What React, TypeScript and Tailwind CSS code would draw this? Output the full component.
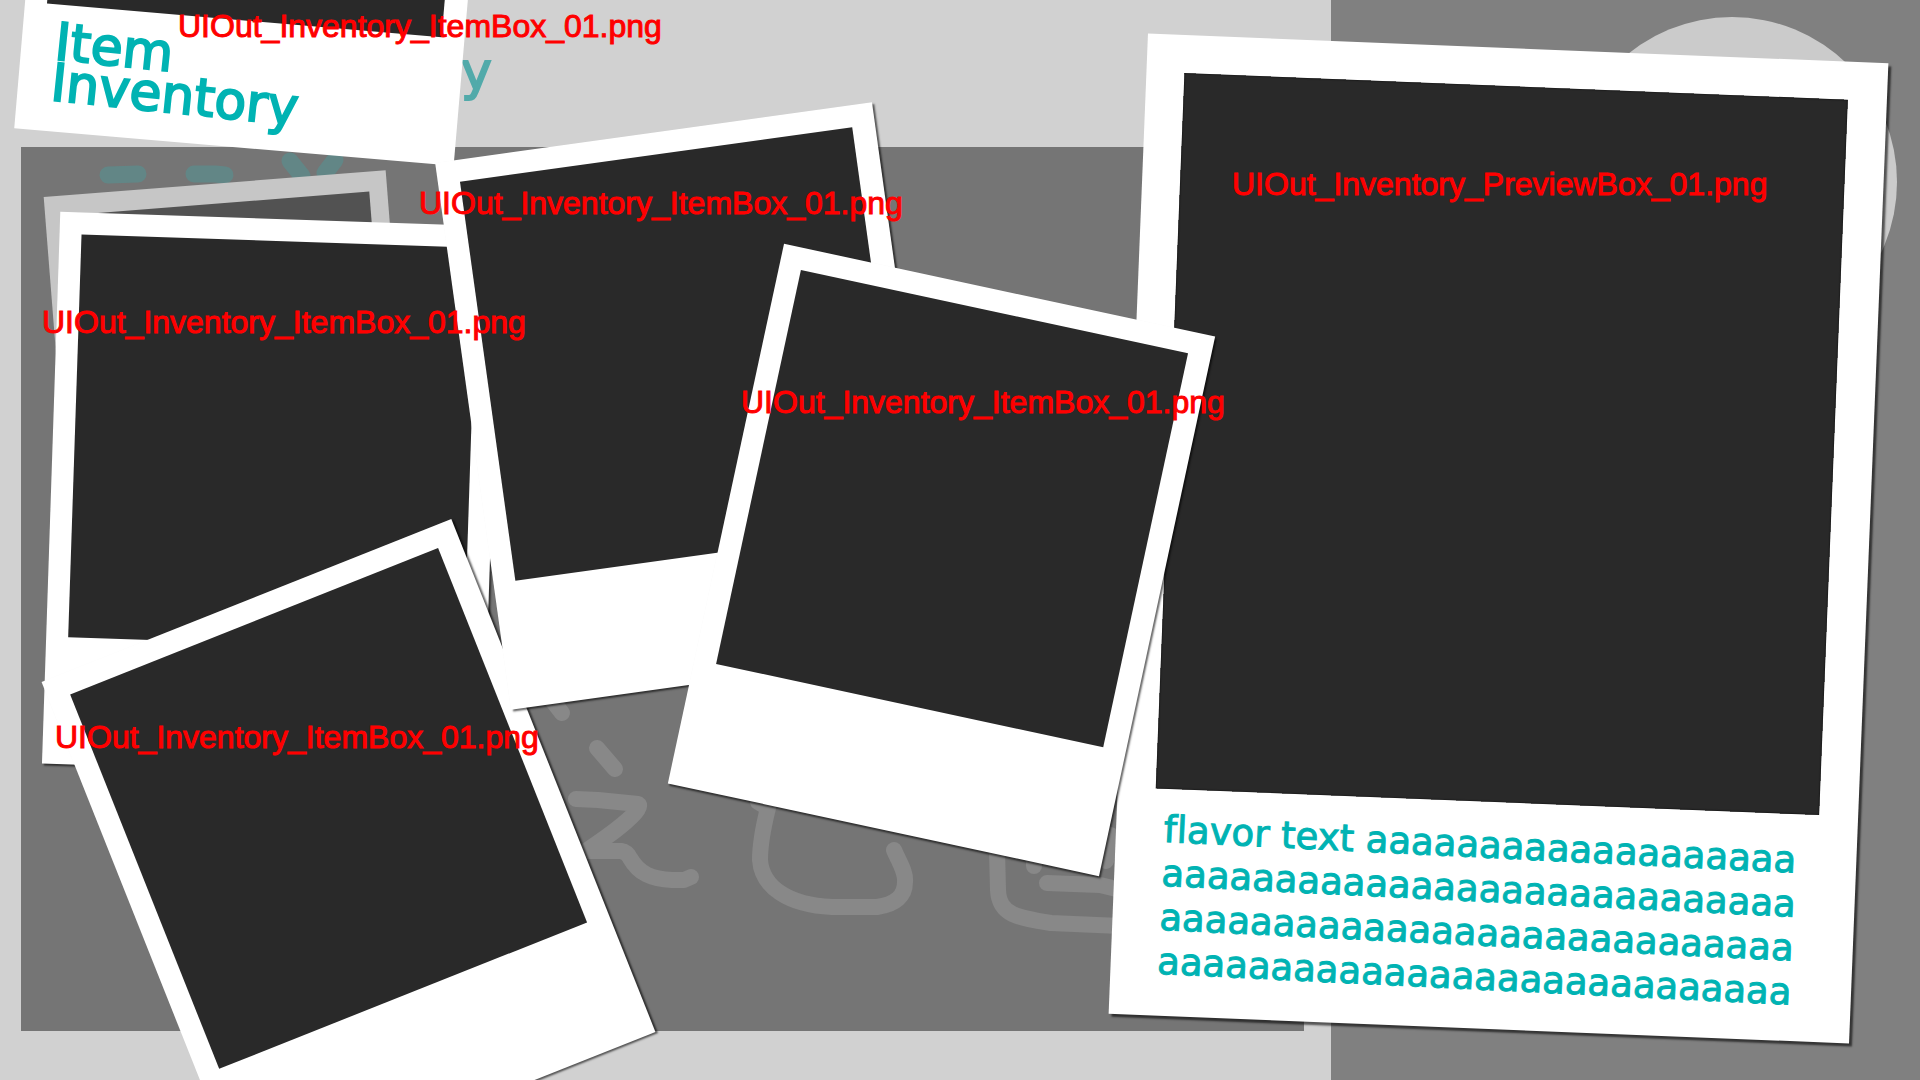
import type { ReactNode } from "react";

const ITEM_FILE = "UIOut_Inventory_ItemBox_01.png";
const PREVIEW_FILE = "UIOut_Inventory_PreviewBox_01.png";

const itemCards = [
  { id: "title", place: "left-[37px] top-[-404px] rotate-[4.9deg]", title: true, shadow: false },
  { id: "left", place: "left-[51px] top-[219px] rotate-[1.9deg]", title: false, shadow: true },
  { id: "bottom", place: "left-[128px] top-[581px] rotate-[-21.7deg]", title: false, shadow: true },
  { id: "upper", place: "left-[471px] top-[130px] rotate-[-7.9deg]", title: false, shadow: true },
];

const fileLabels = [
  { place: "left-[178px] top-[10px]", text: ITEM_FILE },
  { place: "left-[42px] top-[306px]", text: ITEM_FILE },
  { place: "left-[419px] top-[187px]", text: ITEM_FILE },
  { place: "left-[741px] top-[386px]", text: ITEM_FILE },
  { place: "left-[55px] top-[721px]", text: ITEM_FILE },
  { place: "left-[1232px] top-[168px]", text: PREVIEW_FILE },
];

const flavorLines = [
  "flavor text aaaaaaaaaaaaaaaaaaa",
  "aaaaaaaaaaaaaaaaaaaaaaaaaaaa",
  "aaaaaaaaaaaaaaaaaaaaaaaaaaaa",
  "aaaaaaaaaaaaaaaaaaaaaaaaaaaa",
];

function ItemCard({ place, shadow = true, children }: { place: string; shadow?: boolean; children?: ReactNode }) {
  return (
    <article
      className={`absolute h-[552px] w-[441px] bg-white pt-[22px] pr-[23px] pl-[22px] ${place} ${
        shadow ? "shadow-[2px_2px_2px_rgba(0,0,0,0.6)]" : ""
      }`}
    >
      <div className="h-[403px] bg-[#292929]" />
      {children}
    </article>
  );
}

function Scribbles() {
  return (
    <svg
      className="absolute left-0 top-0"
      width="1304"
      height="1031"
      viewBox="0 0 1304 1031"
      fill="none"
      strokeWidth="16"
      strokeLinecap="round"
      strokeLinejoin="round"
      aria-hidden="true"
    >
      <g stroke="#628686" strokeWidth="17">
        <path d="M108 175 L138 174" />
        <path d="M194 174 H215 L225 175" />
        <path d="M290 161 L302 176" />
        <path d="M335 160 L325 173" />
      </g>
      <g stroke="#888888">
        <path d="M552 700 L562 713" />
        <path d="M597 748 L615 769" />
        <path d="M576 799 L598 800 L638 804 Q641 806 635 813 C622 827 605 838 586 851 L621 851 Q627 852 630 858 C639 874 652 879 672 880 H684 L691 877" />
        <path d="M758 802 L768 808 Q760 840 760 860 C762 887 788 905 832 907 H877 Q905 903 905 882 C906 872 900 864 894 850" />
        <path d="M997 850 L998 890 C999 915 1018 918 1051 923 L1120 926" />
        <path d="M1034 862 V866" />
        <path d="M1047 883 L1100 885 L1125 891" />
        <path d="M1111 835 L1106 861" />
      </g>
    </svg>
  );
}

export default function App() {
  return (
    <main className="relative flex min-h-screen w-full overflow-hidden bg-[#808080] font-['DejaVu_Sans',sans-serif]">
      <section className="flex w-[69.3%] bg-[#d1d1d1] pt-[147px] pr-[27px] pb-[49px] pl-[21px]">
        <div className="flex-1 bg-[#757575]" />
      </section>
      <div className="absolute left-[1567px] top-[17px] size-[330px] rounded-full bg-[#cbcbcb]" />
      <Scribbles />
      <span className="absolute left-[461px] top-[45px] text-[52px] leading-none text-[#52aaaa] [-webkit-text-stroke:2px_#52aaaa]">
        y
      </span>

      <div className="absolute left-[60px] top-[183px] h-[429px] w-[343px] rotate-[-4.5deg] bg-[#c6c6c6] px-[18px] pt-[20px]">
        <div className="h-[313px] bg-[#525252]" />
      </div>

      {itemCards.map((card) => (
        <ItemCard key={card.id} place={card.place} shadow={card.shadow}>
          {card.title && (
            <h1 className="mt-[17px] ml-[12px] origin-top-left rotate-1 text-[52px] leading-[41px] text-[#00b3b3] [-webkit-text-stroke:2px_#00b3b3]">
              Item
              <br />
              Inventory
            </h1>
          )}
        </ItemCard>
      ))}

      <article className="absolute left-[1128px] top-[48px] h-[981px] w-[741px] rotate-[2.3deg] bg-white pt-[38px] pr-[39px] pl-[38px] shadow-[3px_3px_2px_rgba(0,0,0,0.6)]">
        <div className="h-[716px] bg-[#292929] shadow-[inset_0_0_2px_#000]" />
        <p className="mt-[19px] ml-[10px] origin-top-left rotate-[0.5deg] whitespace-nowrap text-[37px] leading-[44px] text-[#00b3b3] [-webkit-text-stroke:1px_#00b3b3] [font-variant-ligatures:none]">
          {flavorLines.map((line, i) => (
            <span key={i} className="block">
              {line}
            </span>
          ))}
        </p>
      </article>

      <ItemCard place="left-[721px] top-[284px] rotate-[12.15deg]" />

      {fileLabels.map((label) => (
        <span
          key={label.place}
          className={`absolute whitespace-nowrap font-['Liberation_Sans',sans-serif] text-[32px] leading-none text-[#ff0000] [-webkit-text-stroke:1px_#ff0000] ${label.place}`}
        >
          {label.text}
        </span>
      ))}
    </main>
  );
}
